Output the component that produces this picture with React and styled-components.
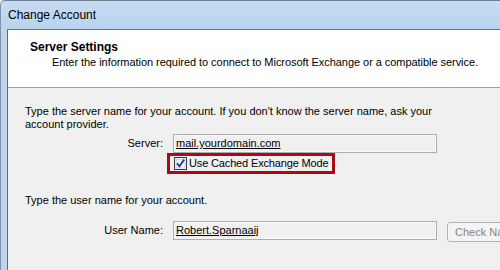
import React from 'react';
import styled, { createGlobalStyle } from 'styled-components';

const GlobalStyle = createGlobalStyle`
	html, body {
		margin: 0;
		padding: 0;
		background: #f0f0f0;
	}
	body {
		font-family: 'Liberation Sans', Arial, sans-serif;
		font-size: 11px;
		color: #000;
	}
`;

const App = () => {
	return (
		<Viewport>
			<GlobalStyle />
			<Window>
				<TitleBar>Change Account</TitleBar>
				<Body>
					<Header>
						<HeaderTitle>Server Settings</HeaderTitle>
						<HeaderText>
							Enter the information required to connect to Microsoft Exchange or a
							compatible service.
						</HeaderText>
					</Header>
					<Content>
						<Paragraph>
							Type the server name for your account. If you don't know the server
							name, ask your
							<br />
							account provider.
						</Paragraph>
						<FieldRow $top={3}>
							<Label>Server:</Label>
							<Field>mail.yourdomain.com</Field>
						</FieldRow>
						<Highlight>
							<CheckBox />
							<CheckLabel>Use Cached Exchange Mode</CheckLabel>
						</Highlight>
						<Paragraph $top={20}>Type the user name for your account.</Paragraph>
						<FieldRow $top={14}>
							<Label>User Name:</Label>
							<Field>Robert.Sparnaaij</Field>
							<Button disabled>Check Names</Button>
						</FieldRow>
					</Content>
				</Body>
			</Window>
		</Viewport>
	);
};

const CheckBox = () => (
	<svg width='13' height='13' viewBox='0 0 13 13'>
		<defs>
			<linearGradient id='cbFill' x1='0' y1='0' x2='1' y2='1'>
				<stop offset='0' stopColor='#dbe6f4' />
				<stop offset='1' stopColor='#f7fbff' />
			</linearGradient>
		</defs>
		<rect x='0.5' y='0.5' width='12' height='12' fill='#fff' stroke='#3a3a3a' />
		<rect x='2' y='2' width='9' height='9' fill='url(#cbFill)' stroke='#a9bbd3' strokeWidth='0.6' />
		<path d='M3 6.3 L5.4 9.2 L10.2 2.6' fill='none' stroke='#1f3d8c' strokeWidth='1.8' />
	</svg>
);

export default App;

const Viewport = styled.div`
	width: 500px;
	height: 270px;
	overflow: hidden;
`;

const Window = styled.div`
	display: flex;
	flex-direction: column;
	width: 580px;
	height: 300px;
	background: #bcd5ef;
	border-top: 1px solid #6f7f95;
	border-left: 1px solid #8093ab;
	border-top-left-radius: 5px;
`;

const TitleBar = styled.div`
	display: flex;
	align-items: center;
	height: 28px;
	padding-left: 7px;
	font-size: 12px;
	color: #000;
	background: linear-gradient(#c6dcf3, #b9d3ee);
	border-top-left-radius: 5px;
`;

const Body = styled.div`
	display: flex;
	flex-direction: column;
	flex: 1;
	margin-left: 6px;
	background: #f0f0f0;
	border-top: 1px solid #707070;
	border-left: 1px solid #5e6e84;
`;

const Header = styled.div`
	display: flex;
	flex-direction: column;
	height: 58px;
	padding: 10px 0 0 22px;
	box-sizing: border-box;
	background: #fff;
	border-bottom: 1px solid #a0a0a0;
`;

const HeaderTitle = styled.div`
	font-weight: bold;
	font-size: 12px;
	line-height: 15px;
`;

const HeaderText = styled.div`
	margin-left: 22px;
	line-height: 15px;
	letter-spacing: -0.05px;
`;

const Content = styled.div`
	display: flex;
	flex-direction: column;
	align-items: flex-start;
	padding: 17px 0 0 17px;
`;

const Paragraph = styled.p`
	margin: ${(p) => p.$top || 0}px 0 0;
	line-height: 13px;
`;

const FieldRow = styled.div`
	display: flex;
	align-items: flex-start;
	gap: 10px;
	margin: ${(p) => p.$top || 0}px 0 0 -17px;
`;

const Label = styled.div`
	width: 155px;
	height: 19px;
	line-height: 19px;
	text-align: right;
`;

const Field = styled.div`
	width: 264px;
	height: 19px;
	box-sizing: border-box;
	padding-left: 2px;
	line-height: 17px;
	border: 1px solid #abadb3;
	box-shadow: inset 0 0 0 1px #f8f8f8;
	text-decoration: underline;
	white-space: nowrap;
`;

const Button = styled.button`
	margin-top: 1px;
	width: 80px;
	height: 20px;
	padding: 0 0 0 7px;
	text-align: left;
	font-family: inherit;
	font-size: 11px;
	color: #838383;
	background: #f4f4f4;
	border: 1px solid #adb2b5;
	border-radius: 3px;
	white-space: nowrap;
`;

const Highlight = styled.div`
	display: flex;
	align-items: center;
	gap: 2px;
	height: 21px;
	box-sizing: border-box;
	margin-left: 142px;
	padding: 0 3px 0 4px;
	border: 3px solid #aa0a14;
`;

const CheckLabel = styled.span`
	line-height: 13px;
	letter-spacing: -0.15px;
`;
